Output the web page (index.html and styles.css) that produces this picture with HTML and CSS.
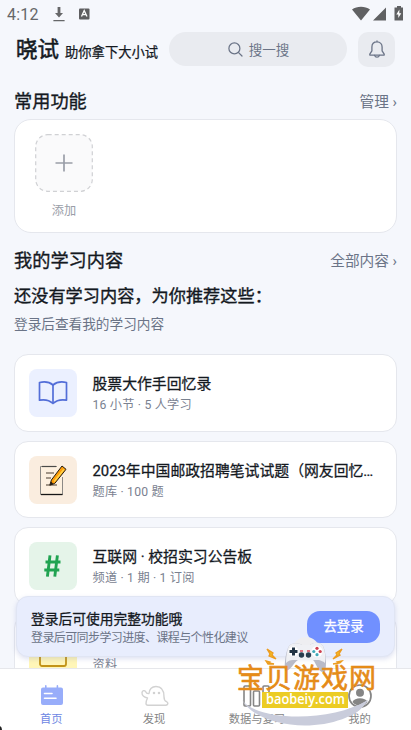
FILE: index.html
```html
<!DOCTYPE html>
<html lang="zh-CN">
<head>
<meta charset="utf-8">
<meta name="viewport" content="width=device-width, initial-scale=1">
<title>晓试</title>
<link rel="stylesheet" href="styles.css">
</head>
<body>
<div class="app">
  <div class="status">
    <span class="clock">4:12</span>
    <svg class="download" width="12" height="15" viewBox="0 0 12 15"><path d="M4.600 0h2.800v6H10L6 10.500 2 6h2.600zM.4 13h11.200v1.300H.4z" fill="#666769"/></svg>
    <svg class="square-a" width="11" height="12" viewBox="0 0 11 12"><rect y=".5" width="10.500" height="11" rx="1" fill="#5e5e60"/><path d="M2.500 8.500 5.200 2.600 8 8.500M3.600 6.700h3.200" fill="none" stroke="#fff" stroke-width="1.300"/></svg>
    <svg class="signals" width="52" height="16" viewBox="0 0 52 16"><path d="M0 3.600C5-.1 13-.1 18 3.600L9 14.500zM34 1.500v13H21z" fill="#606163"/><path d="M45 0h4v1.500h2v13h-8.500v-13H45z" fill="#606163"/><path d="m47.400 3.500-3.100 5h2V12l3-4.700h-2z" fill="#fff"/></svg>
  </div>

  <header class="header">
    <h1 class="brand">晓试</h1>
    <span class="slogan">助你拿下大小试</span>
    <div class="search">
      <svg width="15" height="15" viewBox="0 0 15 15" fill="none" stroke="#6b7487" stroke-width="1.250" stroke-linecap="round"><circle cx="6.400" cy="6.400" r="5.500"/><path d="m10.600 10.600 3.400 3.400"/></svg>
      <span>搜一搜</span>
    </div>
    <div class="bell">
      <svg width="16" height="19" viewBox="0 0 16 19" fill="none" stroke="#6b7487" stroke-width="1.300" stroke-linejoin="round" stroke-linecap="round"><path d="M8 .9v1M8 1.900c-3.200 0-5.100 2.300-5.100 5.200v3.800L.8 14.200v.9h14.400v-.9l-2.100-3.300V7.100C13.100 4.200 11.200 1.900 8 1.900z"/><path d="M5.600 15.400a2.500 2.500 0 0 0 4.800 0"/></svg>
    </div>
  </header>

  <main class="content">
    <div class="section-head">
      <h2>常用功能</h2><span class="more">管理 ›</span>
    </div>
    <section class="shortcuts">
      <div class="shortcut">
        <div class="add-tile">
          <svg width="58" height="58" viewBox="0 0 58 58" fill="none"><rect x=".7" y=".7" width="56.600" height="56.600" rx="12" fill="#fafafb" stroke="#d0d1d4" stroke-width="1.200" stroke-dasharray="4 3"/><path d="M29 20.500v17M20.500 29h17" stroke="#9a9ea8" stroke-width="1.700"/></svg>
        </div>
        <span class="add-label">添加</span>
      </div>
    </section>
    <div class="section-head study-head">
      <h2>我的学习内容</h2><span class="more">全部内容 ›</span>
    </div>
    <h3 class="empty-title">还没有学习内容，为你推荐这些：</h3>
    <p class="empty-sub">登录后查看我的学习内容</p>

    <div class="list">
      <article class="card">
        <div class="thumb blue">
          <svg width="30" height="26" viewBox="0 0 30 26" fill="none" stroke="#536ed8" stroke-width="1.700" stroke-linejoin="round"><path d="M15 5C11.500 2 6 1.500 1.500 2.500v17.700c4-.8 9.500-.4 13.500 3.300 4-3.700 9-4.100 13.500-3.300V2.500C24 1.500 18.500 2 15 5z"/><path d="M15 5v18"/></svg>
        </div>
        <div class="info"><div class="title">股票大作手回忆录</div><div class="meta">16 小节 · 5 人学习</div></div>
      </article>
      <article class="card">
        <div class="thumb orange">
          <svg width="28" height="32" viewBox="0 0 28 32"><path d="M2 2h22v28H2z" fill="#fdf0df"/><path d="M18 2.500H1.500v28h22V13" fill="none" stroke="#8c8985" stroke-width="1"/><path d="M2 30.500h21.500" stroke="#161616" stroke-width="1.300"/><path d="M3 2.500h14" stroke="#4a4a48" stroke-width="1.200"/><path d="M7 9h8M7 14h5M7 21h11" stroke="#493b2e" stroke-width="1.100"/><path d="m23 2 4 3.300-11.300 14.200-4.900 1.700 1.600-5.200z" fill="#ff9d08" stroke="#211b12" stroke-width="1"/><path d="m24.800 5.500-9.500 12" stroke="#ffd64c" stroke-width="1.400"/><path d="m12.200 17.500-1.400 3.700 3.600-1.200z" fill="#241c12"/></svg>
        </div>
        <div class="info"><div class="title">2023年中国邮政招聘笔试试题（网友回忆…</div><div class="meta">题库 · 100 题</div></div>
      </article>
      <article class="card">
        <div class="thumb green">
          <svg width="18" height="22" viewBox="0 0 18 22" fill="none" stroke="#20a351" stroke-width="2.900"><path d="M6 .3 3.400 21.700M13.400 .3l-2.600 21.400M1.500 7h15M.3 15h15"/></svg>
        </div>
        <div class="info"><div class="title">互联网 · 校招实习公告板</div><div class="meta">频道 · 1 期 · 1 订阅</div></div>
      </article>
      <article class="card">
        <div class="thumb yellow">
          <svg width="28" height="32" viewBox="0 0 28 32" fill="none" stroke="#c39418" stroke-width="1.800"><rect x="1" y="1" width="26" height="28" rx="2"/></svg>
        </div>
        <div class="info"><div class="title"></div><div class="meta">资料</div></div>
      </article>
    </div>
  </main>

  <div class="login">
    <div class="login-text"><div class="login-title">登录后可使用完整功能哦</div><div class="login-sub">登录后可同步学习进度、课程与个性化建议</div></div>
    <div class="login-btn">去登录</div>
  </div>

  <nav class="tabs">
    <div class="tab active">
      <svg width="24" height="22" viewBox="0 0 24 22"><path d="M3 2.500h2V1q0-1 .8-1t.8 1v1.500h10V1q0-1 .8-1t.8 1v1.500H21q2 0 2 2V18q0 2-2 2H3q-2 0-2-2V4.500q0-2 2-2z" fill="#98adfa"/><path d="M4.500 8.500H12M4.500 13.300H16" stroke="#fff" stroke-width="1.600" stroke-linecap="round"/></svg>
      <span>首页</span>
    </div>
    <div class="tab">
      <svg width="28" height="22" viewBox="0 0 28 22" fill="none" stroke="#d2d2d2" stroke-width="1.400" stroke-linejoin="round" stroke-linecap="round"><path d="M8 8.500C6.500 9 5.500 8.500 4.500 6.500 3.500 5 1.500 5.500 1 7.500c-.3 3 2.500 5 5.500 5.500-1 2-1.500 4-1.500 5.500q0 1.700 2 1.700h18c2.300-.5 2.500-2.500.5-3.500-2-1-2.500-2.500-2.500-5C23 5 20 1.500 15 1.500c-4 0-6.500 2.500-7 7z"/><circle cx="13" cy="8" r=".6" fill="#c5c5c5"/><circle cx="18" cy="8" r=".6" fill="#c5c5c5"/></svg>
      <span>发现</span>
    </div>
    <div class="tab">
      <svg width="28" height="22" viewBox="0 0 28 22" fill="none" stroke="#858585" stroke-width="1.600"><rect x="1" y="1" width="6.500" height="20" rx="1"/><rect x="10.500" y="6" width="6" height="15" rx="1"/><rect x="20" y="1" width="6" height="20" rx="1"/></svg>
      <span>数据与复习</span>
    </div>
    <div class="tab">
      <svg width="24" height="24" viewBox="0 0 24 24"><circle cx="12" cy="12" r="11" fill="#fff" stroke="#858585" stroke-width="1.700"/><circle cx="12" cy="8.800" r="4" fill="#858585"/><path d="M4.500 18c2-5 13-5 15 0-4 5-11 5-15 0z" fill="#858585"/></svg>
      <span>我的</span>
    </div>
  </nav>

  <svg class="corner" width="3" height="4" viewBox="0 0 3 4"><path d="M0 0q2 1 2 4H0z" fill="#222"/></svg>

  <svg class="site-mark" width="150" height="95" viewBox="230 635 150 95">
    <path d="M242 700c15 21 88 23 126 0-21 34-106 34-126 0z" fill="#c9ccdb"/>
    <path d="M293 646c5-12 21-12 26 0z" fill="#eeeef1"/>
    <path d="M285 671c-1-8 1-20 4-25 3-4 10-3 13-1h8c4-3 10-3 13 1 3 6 4 19 2 26-7 2-9-10-12-12h-15c-4 2-7 11-13 11z" fill="#b9bbc8"/>
    <path d="M286 663c0-7 1-13 3-17 3-4 10-3 13-1h8c4-3 10-3 13 1 2 5 3 11 2 17-2-2-4-2-6-3h-26c-3 0-5 1-7 3z" fill="#eff0f4"/>
    <circle cx="293.500" cy="651.500" r="5" fill="#fff"/><path d="M293.500 647.500v8M289.500 651.500h8" stroke="#233444" stroke-width="3"/>
    <circle cx="317" cy="651.500" r="5.500" fill="#fff"/><g fill="#ce4050"><circle cx="317" cy="648.300" r="1.600"/><circle cx="320.200" cy="651.500" r="1.600"/></g><g fill="#42a9b8"><circle cx="317" cy="654.700" r="1.600"/><circle cx="313.800" cy="651.500" r="1.600"/></g>
    <circle cx="301.500" cy="655" r="2.700" fill="#293d4f"/><circle cx="308.500" cy="655" r="2.700" fill="#293d4f"/><path d="M300 651h3M307 651h3" stroke="#dc4c5d" stroke-width="1.600"/>
    <path d="m267 649 6 4-1 2 4 4-7-3 1-2zM342 649l-6 4 1 2-4 4 7-4-1-1zM266 661l4 1-1 1 5 1-6 0zM342 661l-5 1 1 1-5 1 7-1z" fill="#f4bb24" stroke="#ec9c20" stroke-width="1.300"/>
    <text class="mark-name" x="237" y="687.500" textLength="139">宝贝游戏网</text>
    <path d="M262 692h86v16h-86z" fill="#eccc24"/>
    <text class="mark-url" x="266" y="704" textLength="79" lengthAdjust="spacingAndGlyphs">baobeiy.com</text>
    <path d="M348 709c8-2 13-5 20-9-6 9-11 13-20 17z" fill="#c9ccdb"/>
  </svg>
</div>
</body>
</html>
```

FILE: styles.css
```css
* { box-sizing: border-box; }
body { margin: 0; font-family: Roboto, "Noto Sans CJK SC", sans-serif; }
h1, h2, h3, p { margin: 0; font-weight: 400; }
svg { display: block; flex: none; }

.app {
  position: relative;
  width: 411px;
  height: 730px;
  overflow: hidden;
  background: #f5f7fc;
  color: #14191f;
}

.status { display: flex; align-items: center; height: 28px; padding: 0 7px; }
.clock { width: 46px; font-size: 16px; color: #666769; letter-spacing: .2px; }
.square-a { margin-left: 14px; }
.signals { margin-left: auto; margin-right: 0; }

.header { display: flex; align-items: center; height: 44px; padding: 0 16px; }
.brand { width: 49px; font-size: 21.500px; line-height: 30px; -webkit-text-stroke: .55px; }
.slogan { width: 104px; font-size: 13.300px; line-height: 20px; white-space: nowrap; -webkit-text-stroke: .25px; margin-top: 5px; }
.search {
  display: flex; align-items: center; justify-content: center; gap: 6px;
  width: 178px; height: 34px; margin-top: -2px; border-radius: 17px;
  background: #e9ebf0; color: #6b7487; font-size: 13.500px;
}
.search svg { margin-left: 1px; }
.search span { margin-top: -1px; }
.bell {
  display: flex; align-items: center; justify-content: center;
  width: 37px; height: 35px; margin: -1px 0 0 11px; border-radius: 10px; background: #e9ebf0;
}

.content { padding: 14px 14px 0; }
.section-head { display: flex; align-items: center; justify-content: space-between; height: 27px; }
.section-head h2 { font-size: 18.200px; -webkit-text-stroke: .35px; }
.more { padding-top: 1px; font-size: 14.700px; color: #6b7487; }

.shortcuts { height: 114px; margin-top: 6px; padding: 14px 20px; border: 1px solid #e5e7ed; border-radius: 17px; background: #fff; }
.shortcut { width: 58px; text-align: center; }
.add-label { display: block; margin-top: 10px; font-size: 12.200px; line-height: 18px; color: #9a9ea8; }

.study-head { margin-top: 12px; }
.empty-title { margin-top: 11px; font-size: 17.200px; line-height: 26px; -webkit-text-stroke: .35px; white-space: nowrap; }
.empty-sub { margin-top: 5px; font-size: 13.650px; line-height: 20px; color: #6b7487; }

.list { display: flex; flex-direction: column; gap: 9px; margin-top: 20px; }
.card {
  display: flex; align-items: flex-start; gap: 16px; height: 77.700px; padding: 14px 14px 14px 13.500px;
  border: 1px solid #e5e7ed; border-radius: 14px; background: #fff;
}
.thumb { display: flex; align-items: center; justify-content: center; flex: none; width: 48px; height: 48px; border-radius: 8px; }
.blue { background: #ebf0ff; }
.orange { background: #faeddf; }
.green { background: #e5f4e9; }
.yellow { background: #fff6b8; }
.info { flex: 1; min-width: 0; padding-top: 4px; }
.title { height: 22px; white-space: nowrap; font-size: 14.850px; line-height: 22px; -webkit-text-stroke: .28px; }
.meta { font-size: 12.200px; line-height: 20px; color: #7a8190; letter-spacing: .2px; }

.login {
  position: absolute; left: 16px; top: 596px; width: 379px; height: 61px;
  display: flex; align-items: center; justify-content: space-between; padding: 0 14px;
  border: 1px solid #e0e5f3; border-radius: 12px; background: #e8edfd;
  box-shadow: 0 2px 5px rgba(70, 90, 180, .18);
}
.login-text { padding-top: 2px; }
.login-title { font-size: 13.750px; line-height: 20px; -webkit-text-stroke: .28px; }
.login-sub { font-size: 12px; line-height: 18px; color: #6b7487; letter-spacing: -.6px; white-space: nowrap; }
.login-btn {
  width: 73px; height: 32px; border-radius: 13px; background: #7190ff; color: #fff;
  font-size: 13.400px; line-height: 32px; text-align: center; -webkit-text-stroke: .3px;
}

.tabs {
  position: absolute; left: 0; bottom: 0; width: 411px; height: 62px;
  display: grid; grid-template-columns: repeat(4, 1fr);
  border-top: 1px solid #e6e7eb; background: #fff;
}
.tab { display: grid; grid-template-rows: 42px 16px; justify-items: center; align-items: center; padding-top: 1px; }
.tab svg { margin: 9px 0 0 1px; }
.tab span { font-size: 11.300px; line-height: 16px; color: #858585; }
.tab.active span { color: #6e87e3; }

.corner { position: absolute; left: 0; bottom: 0; }
.site-mark { position: absolute; left: 230px; top: 635px; }
.mark-name { font: 27px "Noto Sans CJK SC", sans-serif; fill: #e58b18; stroke: #e58b18; stroke-width: .6px; }
.mark-url { font: 600 14.500px "Open Sans", sans-serif; fill: #fff; }
```
